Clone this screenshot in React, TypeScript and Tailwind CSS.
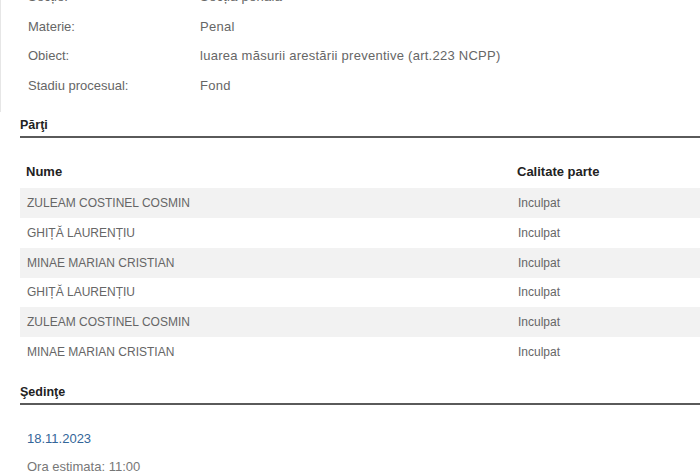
const details = [
  { label: "Secție:", value: "Secția penală" },
  { label: "Materie:", value: "Penal" },
  { label: "Obiect:", value: "luarea măsurii arestării preventive (art.223 NCPP)" },
  { label: "Stadiu procesual:", value: "Fond" },
];

const parti = [
  "ZULEAM COSTINEL COSMIN",
  "GHIȚĂ LAURENȚIU",
  "MINAE MARIAN CRISTIAN",
  "GHIȚĂ LAURENȚIU",
  "ZULEAM COSTINEL COSMIN",
  "MINAE MARIAN CRISTIAN",
];

const body = "font-['Liberation_Sans',Arial,sans-serif]";

export default function App() {
  return (
    <div className={`h-[476px] w-[700px] overflow-hidden bg-white ${body}`}>
      <div className="-mt-[18px] border-l border-[#e6e6e6]">
        {details.map((d) => (
          <div key={d.label} className="flex h-[29.6px] items-center text-[13px] text-[#666]">
            <span className="w-[199px] pl-[27px]">{d.label}</span>
            <span className="tracking-[0.26px]">{d.value}</span>
          </div>
        ))}
        <div className="h-[12px]" />
      </div>

      <div className="ml-[20px]">
        <h2 className="border-b-2 border-[#5a5a5a] pb-[1px] pt-[4px] text-[12.5px] font-bold text-[#222]">
          Părţi
        </h2>

        <div className="mt-[23px] flex h-[22px] items-center text-[13px] font-bold text-[#222]">
          <span className="w-[497px] pl-[6px]">Nume</span>
          <span>Calitate parte</span>
        </div>
        <div className="mt-[5px]">
          {parti.map((p, i) => (
            <div
              key={i}
              className={`flex h-[29.8px] items-center text-[12px] text-[#666] ${i % 2 === 0 ? "bg-[#f2f2f2]" : ""}`}
            >
              <span className="w-[491px] pl-[7px]">{p}</span>
              <span className="pl-[7px]">Inculpat</span>
            </div>
          ))}
        </div>

        <h2 className="mt-[16px] border-b-2 border-[#5a5a5a] pb-[1px] text-[12.5px] font-bold text-[#222]">
          Şedinţe
        </h2>

        <div className="pl-[7px] pt-[24px] text-[13px]">
          <div className="text-[#336699]">18.11.2023</div>
          <div className="mt-[9px] text-[#777]">Ora estimata: 11:00</div>
        </div>
      </div>
    </div>
  );
}
